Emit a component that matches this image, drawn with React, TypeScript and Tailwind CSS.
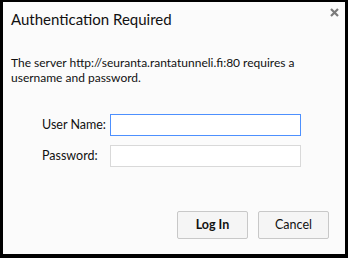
export default function App() {
  return (
    <div className="w-[348px] h-[258px] bg-black pt-[2px] pl-[3px] pr-[3px] pb-[4px]">
      <div
        className="relative h-full bg-[#fbfbfb] flex flex-col text-black"
        style={{ fontFamily: 'Lato, "Noto Sans", sans-serif' }}
      >
        {/* close */}
        <svg className="absolute right-[6px] top-[6px] w-[9px] h-[9px]" viewBox="0 0 9 9">
          <path d="M1 1 L8 8 M8 1 L1 8" stroke="#7a7a7a" strokeWidth={2.2} />
        </svg>

        <h1 className="pl-[8px] pt-[7px] text-[15px] leading-[21px] text-[#111]">Authentication Required</h1>

        <p className="pl-[8px] pr-[10px] mt-[25px] text-[12px] leading-[15px] text-[#111]">
          The server http://seuranta.rantatunneli.fi:80 requires a username and password.
        </p>

        <div className="mt-[29px] flex flex-col gap-[9px] pl-[39px]">
          <div className="flex items-center">
            <span className="w-[68px] text-[12.5px] text-[#111]">User Name:</span>
            <input className="w-[191px] h-[22px] bg-white border border-[#4d90fe] outline-none" />
          </div>
          <div className="flex items-center">
            <span className="w-[68px] text-[12.5px] text-[#111]">Password:</span>
            <input type="password" className="w-[191px] h-[22px] bg-white border border-[#d9d9d9] outline-none" />
          </div>
        </div>

        <div className="mt-auto mb-[15px] flex justify-end gap-[10px] pr-[16px]">
          <button className="w-[71px] h-[28px] bg-[#f5f5f5] border border-[#c8c8c8] rounded-[2px] text-[12.5px] font-bold text-[#111]">
            Log In
          </button>
          <button className="w-[71px] h-[28px] bg-[#f5f5f5] border border-[#c8c8c8] rounded-[2px] text-[12.5px] text-[#111]">
            Cancel
          </button>
        </div>
      </div>
    </div>
  );
}
